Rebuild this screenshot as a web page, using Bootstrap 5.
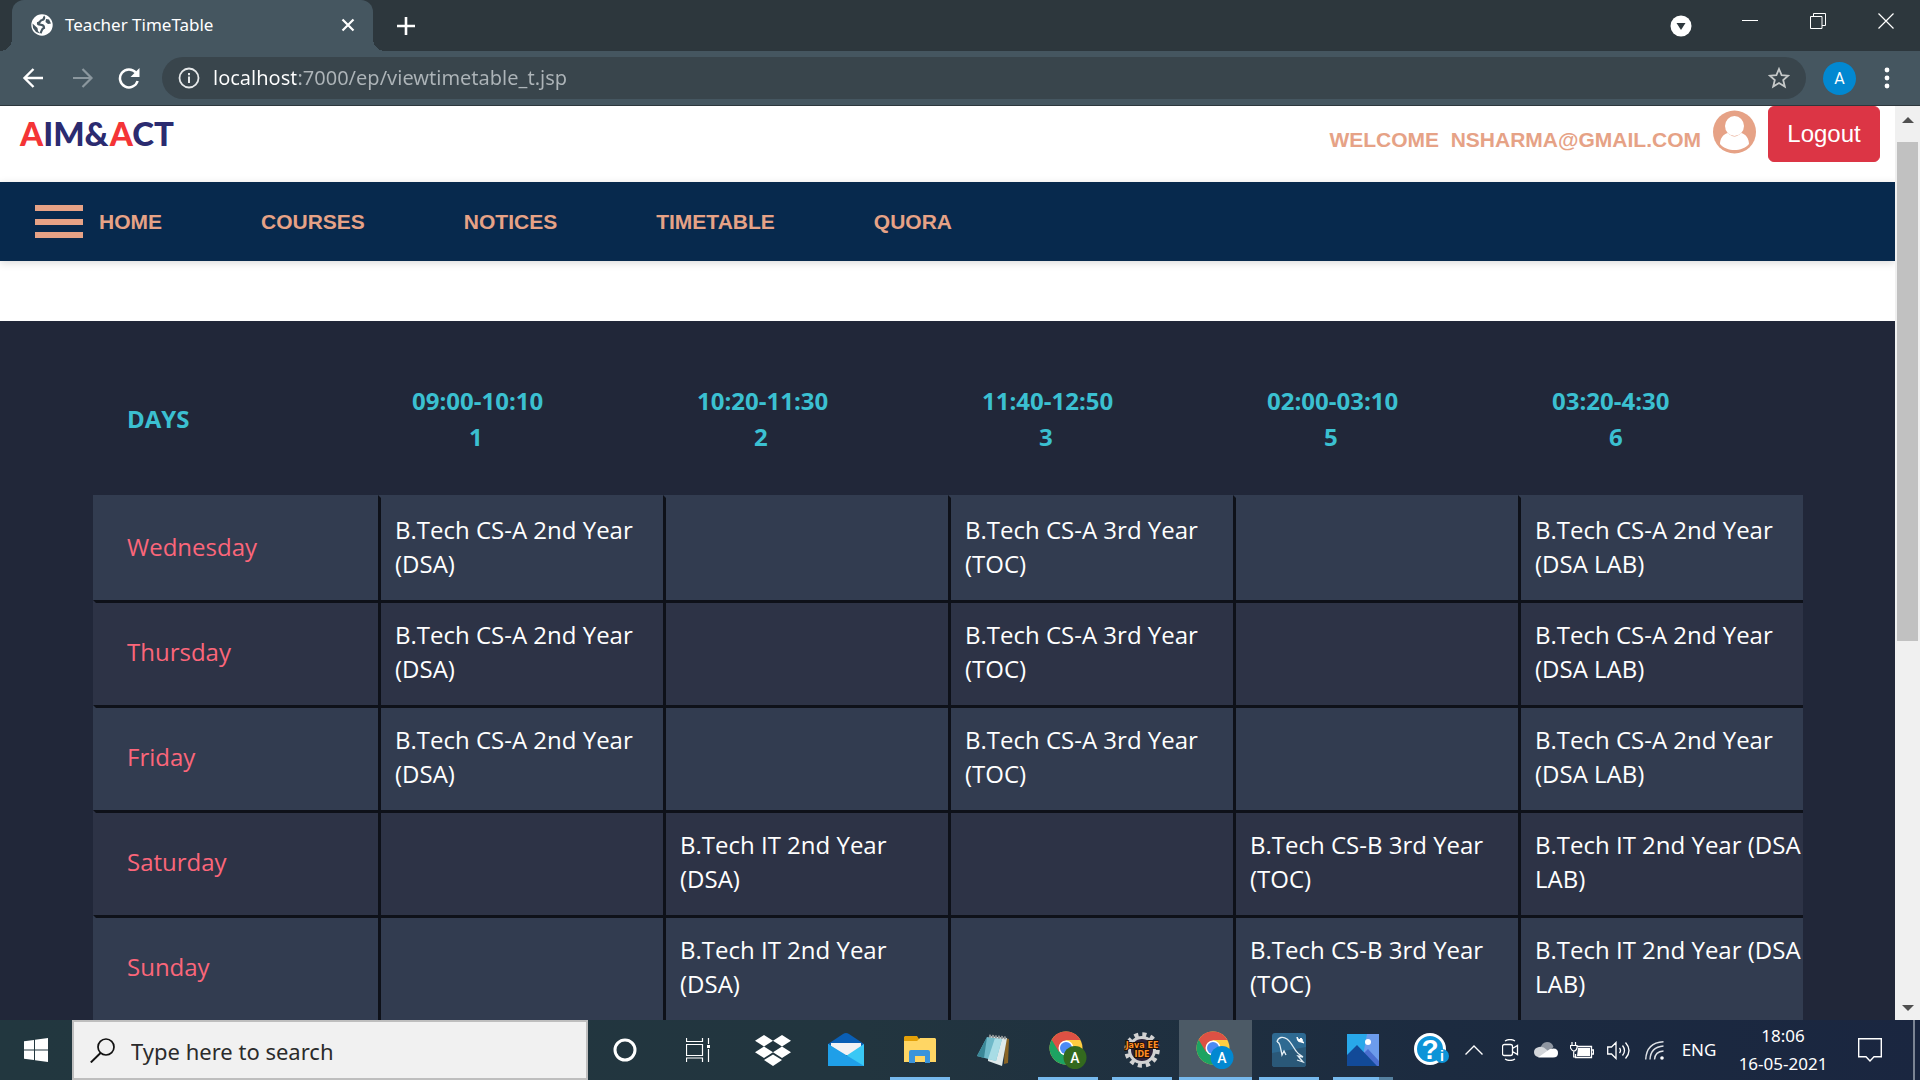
<!DOCTYPE html>
<html lang="en">
<head>
<meta charset="utf-8">
<meta name="viewport" content="width=device-width, initial-scale=1">
<title>Teacher TimeTable</title>
<link href="https://cdn.jsdelivr.net/npm/bootstrap@5.3.0/dist/css/bootstrap.min.css" rel="stylesheet">
<style>
  :root { --peach:#e6a286; --navy:#07294d; --ui:"Noto Sans","Open Sans",sans-serif; }
  body { font-family:"Liberation Sans",Arial,sans-serif; }
  svg { display:block; flex:none; }
  .plain { background:none; border:0; padding:0; color:inherit; display:flex; align-items:center; justify-content:center; }

  /* browser frame */
  .tabstrip { background:#2d373d; height:51px; color:#fff; font-family:var(--ui); padding-left:12px; }
  .tab { background:#455660; width:361px; border-radius:12px 12px 0 0; padding:0 16px 2px 19px; font-size:17px; position:relative; }
  .tab::before, .tab::after { content:""; position:absolute; bottom:0; width:12px; height:12px; }
  .tab::before { left:-12px; background:radial-gradient(circle at 0 0,transparent 12px,#455660 12px); }
  .tab::after { right:-12px; background:radial-gradient(circle at 100% 0,transparent 12px,#455660 12px); }
  .winctl { width:68px; height:42px; }
  .toolbar { background:#455660; height:55px; border-bottom:1px solid #2d373d; color:#fff; padding:0 22px; }
  .addr { background:#39454c; height:42px; border-radius:21px; padding:0 16px; margin-left:22px; }
  .addr input { border:0; outline:0; padding:0; margin-left:13px; height:34px; font:20px/34px var(--ui); color:transparent;
    background:linear-gradient(90deg,#fff 83px,#adb4b8 83px); -webkit-background-clip:text; background-clip:text; }
  .profile { width:33px; height:33px; background:#0288d1; font:16px Roboto,sans-serif; margin:0 20px 0 17px; color:#fff; }

  /* page header */
  .tophead { height:76px; padding:0 15px 0 20px; }
  .brand { font:900 33px/54px Lato,Roboto,sans-serif; color:#2b2b70; text-decoration:none; }
  .brand b { color:#f43436; font-weight:inherit; }
  .user { color:var(--peach); font-size:21px; font-weight:bold; line-height:24px; margin-top:22px; white-space:pre; }
  .btn-logout { font-size:24px; height:56px; width:112px; border-radius:6px; line-height:30px; }
  .mainnav { background:var(--navy); height:79px; padding-left:35px; box-shadow:0 2px 8px rgba(0,0,0,.15); }
  .mainnav a { color:var(--peach); font-size:21px; font-weight:bold; text-decoration:none; }
  .burger { width:48px; height:33px; margin-right:16px; }
  .burger span { display:block; height:6px; width:100%; background:var(--peach); }
  .links { gap:99px; }

  /* timetable */
  .board { background:#212739; margin-top:60px; padding:24px 92px 0 93px; font-family:"Open Sans","Noto Sans",sans-serif; font-size:24px; }
  .slots { width:100%; table-layout:fixed; border-collapse:separate; border-spacing:0; color:#fff; }
  .slots thead th { height:150px; padding:0 0 2px 34px; color:#3bc0d1; line-height:36px; vertical-align:middle; }
  .period { display:block; padding-left:57px; }
  .slots tbody > tr > * { height:105px; border:solid #0e1119; border-width:3px 0 0 3px; padding:0 0 4px 14px; line-height:34px; font-weight:400; }
  .slots tbody tr:nth-child(odd) > * { background:#323c50; }
  .slots tbody tr:nth-child(even) > * { background:#2d3346; }
  .slots tbody tr > th { border-left-color:transparent; color:#fb667a; padding-left:31px; }
  .slots tbody tr:first-child > * { border-top-color:transparent; }

  .scroller { width:25px; background:#f0f0f0; padding:0 2px; }
  .scroller .arrow { height:36px; width:100%; }
  .scroller .down { height:24px; }
  .thumb { background:#c1c1c1; flex:0 1 499px; width:100%; }

  /* taskbar */
  .taskbar { height:60px; background:linear-gradient(90deg,#22373f 0,#22353f 45%,#1c2b40 75%,#1a2640 100%); color:#fff; font-family:var(--ui); }
  .start { width:72px; }
  .search { width:516px; background:#f1f1f1; border:2px solid #bebebe; padding-left:16px; }
  .search input { border:0; outline:0; background:none; font:22px var(--ui); color:#222; padding:2px 0 0; }
  .search input::placeholder { color:#2b2b2b; opacity:1; }
  .app { flex:1 1 0; position:relative; }
  .app.open::after { content:""; position:absolute; left:7px; right:7px; bottom:0; height:3px; background:#76b9ed; }
  .app.active { background:#4c5a66; }
  .app.active::after { left:0; right:0; }
  .app.multi::after { background:linear-gradient(90deg,#76b9ed 76%,#55809f 76%); }
  .tray > * { width:36px; }
  .tray .help { width:48px; }
  .tray .lang { width:54px; font-size:17px; }
  .tray .clock { width:114px; font-size:17px; line-height:28px; }
  .tray .notes { width:60px; }
  .tray .desk { width:7px; margin-left:13px; border-left:2px solid #7b8494; }
</style>
</head>
<body class="vh-100 d-flex flex-column overflow-hidden">

<header class="flex-shrink-0">
  <div class="tabstrip d-flex">
    <div class="tab d-flex align-items-center">
      <svg width="22" height="22" viewBox="0 0 22 22"><circle cx="11" cy="11" r="10.700" fill="#fff"/><path d="M12.500 2.500c1.500 1 .500 3-1.500 3.500-2 .300-1.500 2.500-4 3-.500 2 1.500 1.500 3.500 1.800 2 .200 2.500 1.500 2.500 3-2.500.500-2 3-3.500 5.500" fill="none" stroke="#455660" stroke-width="2.200"/><path d="M1.500 9.500l5 4.500.500 3 2 2.500-4-1.500-3-4zM15 5l3 .500 2 4-3 .500-2.500-2z" fill="#455660"/></svg>
      <span class="ms-2 ps-1 flex-grow-1">Teacher TimeTable</span>
      <button class="plain" aria-label="Close tab"><svg width="18" height="18" viewBox="0 0 18 18"><path d="M3.500 3.500l11 11M14.500 3.500l-11 11" stroke="#fff" stroke-width="2.200"/></svg></button>
    </div>
    <button class="plain px-4" aria-label="New tab"><svg width="18" height="18" viewBox="0 0 18 18"><path d="M9 0v18M0 9h18" stroke="#fff" stroke-width="2.600"/></svg></button>
    <div class="ms-auto d-flex align-items-start">
      <button class="plain h-100 me-4" aria-label="Search tabs"><svg width="22" height="22" viewBox="0 0 22 22"><circle cx="11" cy="11" r="10.500" fill="#fff"/><path d="M6.500 8h9L11 15z" fill="#2d373d"/></svg></button>
      <button class="plain winctl" aria-label="Minimise"><svg width="16" height="16" viewBox="0 0 16 16"><path d="M0 7.500h16" stroke="#fff"/></svg></button>
      <button class="plain winctl" aria-label="Restore"><svg width="16" height="16" viewBox="0 0 16 16"><path d="M.500 3.500h11.500v12H.500zM3.500 3.500v-3h12v12H12" fill="none" stroke="#fff"/></svg></button>
      <button class="plain winctl" aria-label="Close"><svg width="16" height="16" viewBox="0 0 16 16"><path d="M.500.500l15 15M15.500.500l-15 15" stroke="#fff" stroke-width="1.200"/></svg></button>
    </div>
  </div>
  <div class="toolbar d-flex align-items-center">
    <button class="plain" aria-label="Back"><svg width="22" height="22" viewBox="0 0 22 22"><path d="M21 11H3M11.500 2L2.500 11l9 9" fill="none" stroke="#fff" stroke-width="2.400"/></svg></button>
    <button class="plain ms-4 ps-1" aria-label="Forward"><svg width="22" height="22" viewBox="0 0 22 22"><path d="M1 11h18M10.500 2l9 9-9 9" fill="none" stroke="#8b979e" stroke-width="2.200"/></svg></button>
    <button class="plain ms-4" aria-label="Reload"><svg width="22" height="22" viewBox="0 0 22 22"><path d="M17.800 5.500A9 9 0 1 0 19.600 14" fill="none" stroke="#fff" stroke-width="2.500"/><path d="M21.500 1v9h-9z" fill="#fff"/></svg></button>
    <div class="addr d-flex align-items-center flex-grow-1">
      <svg width="22" height="22" viewBox="0 0 22 22"><circle cx="11" cy="11" r="9.500" fill="none" stroke="#e6e9ea" stroke-width="1.800"/><path d="M11 9.500V16M11 6v2.200" stroke="#e6e9ea" stroke-width="2"/></svg>
      <input class="flex-grow-1" aria-label="Address" value="localhost:7000/ep/viewtimetable_t.jsp">
      <button class="plain" aria-label="Bookmark"><svg width="22" height="22" viewBox="0 0 22 22"><path d="M11 2l2.600 6.200 6.600.500-5 4.300 1.600 6.500L11 16l-5.800 3.500L6.800 13l-5-4.300 6.600-.500z" fill="none" stroke="#c6c9c9" stroke-width="1.800"/></svg></button>
    </div>
    <button class="plain profile rounded-circle" aria-label="Profile">A</button>
    <button class="plain" aria-label="Menu"><svg width="22" height="22" viewBox="0 0 22 22"><g fill="#fff"><circle cx="11" cy="3" r="2.400"/><circle cx="11" cy="11" r="2.400"/><circle cx="11" cy="19" r="2.400"/></g></svg></button>
  </div>
</header>

<div class="d-flex flex-grow-1 overflow-hidden">
  <main class="flex-grow-1 overflow-hidden bg-white d-flex flex-column">
    <div class="tophead d-flex align-items-start justify-content-between flex-shrink-0">
      <a class="brand" href="#"><b>A</b>IM&amp;<b>A</b>CT</a>
      <div class="d-flex align-items-start">
        <span class="user">WELCOME  NSHARMA@GMAIL.COM</span>
        <svg class="mx-2 px-1 mt-1" width="51" height="44" viewBox="0 0 43 44"><circle cx="21.500" cy="22" r="21.500" fill="#e6a286"/><ellipse cx="21.500" cy="16" rx="9.500" ry="10" fill="#fff"/><path d="M7 34c0-5 3-10 8-11 4 4.500 9 4.500 13 0 5 1 8 6 8 11-7 8-22 8-29 0z" fill="#fff"/></svg>
        <button class="btn btn-danger btn-logout">Logout</button>
      </div>
    </div>
    <nav class="mainnav d-flex align-items-center flex-shrink-0">
      <button class="plain burger flex-column justify-content-between" aria-label="Menu"><span></span><span></span><span></span></button>
      <div class="links d-flex">
        <a href="#">HOME</a><a href="#">COURSES</a><a href="#">NOTICES</a><a href="#">TIMETABLE</a><a href="#">QUORA</a>
      </div>
    </nav>
    <section class="board flex-grow-1">
      <table class="slots">
        <thead>
          <tr>
            <th scope="col">DAYS</th>
            <th scope="col">09:00-10:10<span class="period">1</span></th>
            <th scope="col">10:20-11:30<span class="period">2</span></th>
            <th scope="col">11:40-12:50<span class="period">3</span></th>
            <th scope="col">02:00-03:10<span class="period">5</span></th>
            <th scope="col">03:20-4:30<span class="period">6</span></th>
          </tr>
        </thead>
        <tbody>
          <tr><th scope="row">Wednesday</th><td>B.Tech CS-A 2nd Year (DSA)</td><td></td><td>B.Tech CS-A 3rd Year (TOC)</td><td></td><td>B.Tech CS-A 2nd Year (DSA LAB)</td></tr>
          <tr><th scope="row">Thursday</th><td>B.Tech CS-A 2nd Year (DSA)</td><td></td><td>B.Tech CS-A 3rd Year (TOC)</td><td></td><td>B.Tech CS-A 2nd Year (DSA LAB)</td></tr>
          <tr><th scope="row">Friday</th><td>B.Tech CS-A 2nd Year (DSA)</td><td></td><td>B.Tech CS-A 3rd Year (TOC)</td><td></td><td>B.Tech CS-A 2nd Year (DSA LAB)</td></tr>
          <tr><th scope="row">Saturday</th><td></td><td>B.Tech IT 2nd Year (DSA)</td><td></td><td>B.Tech CS-B 3rd Year (TOC)</td><td>B.Tech IT 2nd Year (DSA LAB)</td></tr>
          <tr><th scope="row">Sunday</th><td></td><td>B.Tech IT 2nd Year (DSA)</td><td></td><td>B.Tech CS-B 3rd Year (TOC)</td><td>B.Tech IT 2nd Year (DSA LAB)</td></tr>
        </tbody>
      </table>
    </section>
  </main>
  <div class="scroller d-flex flex-column flex-shrink-0" aria-hidden="true">
    <div class="arrow d-flex align-items-center justify-content-center pb-2"><svg width="12" height="6" viewBox="0 0 12 6"><path d="M0 6l6-6 6 6z" fill="#505050"/></svg></div>
    <div class="thumb"></div>
    <div class="arrow down mt-auto d-flex align-items-center justify-content-center"><svg width="12" height="6" viewBox="0 0 12 6"><path d="M0 0h12L6 6z" fill="#505050"/></svg></div>
  </div>
</div>

<footer class="taskbar d-flex flex-shrink-0">
  <button class="plain start" aria-label="Start"><svg width="24" height="24" viewBox="0 0 24 24"><path d="M0 3.300l10-1.300v9.500H0zM11 1.800L24 0v11.500H11zM0 12.500h10V22L0 20.700zM11 12.500h13V24l-13-1.800z" fill="#fff"/></svg></button>
  <label class="search d-flex align-items-center">
    <svg width="25" height="25" viewBox="0 0 25 25"><circle cx="16" cy="9" r="8" fill="none" stroke="#111" stroke-width="1.700"/><path d="M10.500 15L.800 24.500" stroke="#111" stroke-width="1.900"/></svg>
    <input class="flex-grow-1 ms-3" type="text" placeholder="Type here to search" aria-label="Type here to search">
  </label>
  <div class="d-flex flex-grow-1">
    <button class="plain app" aria-label="Cortana"><svg width="24" height="24" viewBox="0 0 24 24"><circle cx="12" cy="12" r="10" fill="none" stroke="#fff" stroke-width="3"/></svg></button>
    <button class="plain app" aria-label="Task view"><svg width="25" height="24" viewBox="0 0 25 24"><path d="M.500 0v3.500h16V0M.500 6.500h16v11H.500zM.500 24v-4h16v4M22.500 0v6M22.500 11v13" fill="none" stroke="#fff" stroke-width="1.200"/><path d="M21 7h3v3h-3z" fill="#fff"/></svg></button>
    <button class="plain app" aria-label="Dropbox"><svg width="36" height="31" viewBox="0 0 36 31"><path d="M9 0l9 5.700-9 5.800-9-5.800zM27 0l9 5.700-9 5.800-9-5.800zM9 11.500l9 5.700-9 5.800-9-5.800zM27 11.500l9 5.700-9 5.800-9-5.800zM18 19.500l9 5.600L18 31l-9-5.900z" fill="#fff"/></svg></button>
    <button class="plain app" aria-label="Mail"><svg width="36" height="34" viewBox="0 0 36 34"><path d="M0 11L15 1q3-2 6 0l15 10v6H0z" fill="#0a5fb5"/><path d="M3 10h30v12H3z" fill="#f2f2f4"/><path d="M0 11l18 12 18-12v22H0z" fill="#39c8f5"/><path d="M0 11l36 22H0z" fill="#1f9fe8"/></svg></button>
    <button class="plain app open" aria-label="File Explorer"><svg width="32" height="28" viewBox="0 0 32 28"><path d="M1 0h12l2 3h16l1 1v22H0V1z" fill="#e3a008"/><path d="M0 5h13l3-3h15l1 1v23H0z" fill="#ffd664"/><path d="M5 27V16q0-2 2-2h17q2 0 2 2v11h-5v-7H11v7z" fill="#3a94dc"/></svg></button>
    <button class="plain app" aria-label="Notepad"><svg width="34" height="34" viewBox="0 0 34 34"><path d="M28 5l4 1-1 24-4 1z" fill="#8a6425"/><path d="M12 3l18 2-5 28-14-5z" fill="#dfe9ea"/><path d="M10 4l15 2-6 22-19-5z" fill="#6fb9c9"/><path d="M10 4L0 23l7 2z" fill="#3a8797"/><path d="M18 5l7 1-6 22-8-2z" fill="#a8dce5"/><path d="M12 3l18 2" stroke="#8d9293" stroke-width="3" stroke-dasharray="2 1"/></svg></button>
    <button class="plain app open" aria-label="Chrome, profile A"><svg width="38" height="38" viewBox="0 0 38 38"><circle cx="17" cy="17" r="16.500" fill="#ffcd40"/><path d="M17 17L2.700 8.800A16.500 16.500 0 0 0 17 33.500l8-12z" fill="#1da362"/><path d="M2.700 8.800A16.500 16.500 0 0 1 31.500 9H17l-7 12z" fill="#dd5144"/><circle cx="17" cy="17" r="7.500" fill="#fff"/><circle cx="17" cy="17" r="6" fill="#4c8bf5"/><circle cx="26" cy="26.500" r="11.500" fill="#33691e"/><text x="26" y="31.500" text-anchor="middle" font-family="Roboto" font-weight="500" font-size="14" fill="#fff">A</text></svg></button>
    <button class="plain app open" aria-label="Java EE IDE"><svg width="36" height="36" viewBox="0 0 36 36"><circle cx="18" cy="18" r="15.500" fill="none" stroke="#d2d2d2" stroke-width="4.500" stroke-dasharray="4.100 4"/><circle cx="18" cy="18" r="12.500" fill="#2b2138" stroke="#d2d2d2" stroke-width="3"/><g font-family="DejaVu Sans" font-weight="bold" font-size="8" fill="#ff8d22" text-anchor="middle" stroke="#201008" stroke-width="2" paint-order="stroke"><text x="18" y="16">Java EE</text><text x="18" y="25">IDE</text></g></svg></button>
    <button class="plain app open active" aria-label="Chrome, current window"><svg width="38" height="38" viewBox="0 0 38 38"><circle cx="17" cy="17" r="16.500" fill="#ffcd40"/><path d="M17 17L2.700 8.800A16.500 16.500 0 0 0 17 33.500l8-12z" fill="#1da362"/><path d="M2.700 8.800A16.500 16.500 0 0 1 31.500 9H17l-7 12z" fill="#dd5144"/><circle cx="17" cy="17" r="7.500" fill="#fff"/><circle cx="17" cy="17" r="6" fill="#4c8bf5"/><circle cx="26" cy="26.500" r="11.500" fill="#0288d1"/><text x="26" y="31.500" text-anchor="middle" font-family="Roboto" font-weight="500" font-size="14" fill="#fff">A</text></svg></button>
    <button class="plain app open" aria-label="MySQL Workbench"><svg width="34" height="34" viewBox="0 0 34 34"><rect width="34" height="34" rx="3" fill="#2e6a92"/><path d="M0 20l34-6v17q0 3-3 3H3q-3 0-3-3z" fill="#2a5878"/><path d="M5 9c1-5 6-6 10-3s6 8 9 12c2 3 4 4 7 6l-5-1 5 6-6-2M5 9c3 0 3 4 4 8l1 5 2-4 2 4" fill="none" stroke="#e4eef4" stroke-width="1.300"/><path d="M25 4l2 3 2-2c2 1 1 4 3 5l-3-1c-3 0-4-2-4-5z" fill="#fff" stroke="#fff"/></svg></button>
    <button class="plain app open multi" aria-label="Photos"><svg width="32" height="32" viewBox="0 0 32 32"><path d="M0 0h32v32H0z" fill="#28a8ea"/><path d="M20 0h12v32H14z" fill="#6c9cec"/><circle cx="21" cy="8" r="3" fill="#fff"/><path d="M12 24l9-9 11 12v5H12z" fill="#4a6fd0"/><path d="M0 21L10 11l20 21H0z" fill="#124a98"/></svg></button>
  </div>
  <div class="tray d-flex ps-2">
    <button class="plain help" aria-label="Help"><svg width="36" height="34" viewBox="0 0 36 34"><circle cx="16" cy="16" r="14.500" fill="#0d94d8" stroke="#fff" stroke-width="3"/><text x="16" y="26" text-anchor="middle" font-family="Liberation Sans" font-weight="bold" font-size="28" fill="#fff">?</text><circle cx="28" cy="23" r="7" fill="#0d94d8"/><text x="28" y="28" text-anchor="middle" font-family="Liberation Sans" font-weight="bold" font-size="14" fill="#fff">i</text></svg></button>
    <button class="plain" aria-label="Show hidden icons"><svg width="18" height="10" viewBox="0 0 18 10"><path d="M.500 9.500L9 1l8.500 8.500" fill="none" stroke="#fff" stroke-width="1.400"/></svg></button>
    <button class="plain" aria-label="Meet now"><svg width="17" height="22" viewBox="0 0 17 22"><path d="M3 2q5-3 10 0M3 20q5 3 10 0M2.500 5.500h6q2 0 2 2v7q0 2-2 2h-6q-2 0-2-2v-7q0-2 2-2zM10.500 9.500l5-3v9l-5-3" fill="none" stroke="#fff" stroke-width="1.300"/></svg></button>
    <button class="plain" aria-label="OneDrive"><svg width="24" height="16" viewBox="0 0 24 16"><path d="M6 7Q8 0 13 0q5 0 6.500 5L13 11z" fill="#8f96a1"/><path d="M4 15q-4-1-4-5t5-5q4-1 8 3l7 7z" fill="#d3d6da"/><path d="M4 15.500L16 7q8-2 8 4 0 4.500-5 4.500z" fill="#fff"/></svg></button>
    <button class="plain" aria-label="Battery"><svg width="24" height="17" viewBox="0 0 24 17"><path d="M7 4.500h14.500v11H5.500V12M22 8h1.500v4H22" fill="none" stroke="#fff" stroke-width="1.300"/><path d="M8 6h12v8H7z" fill="#fff"/><path d="M2 0v3M5.500 0v3M.500 3.500h6.500V6q-1 3-3 3T.500 6zM3.700 9v6h2" fill="none" stroke="#fff" stroke-width="1.200"/></svg></button>
    <button class="plain" aria-label="Volume"><svg width="23" height="19" viewBox="0 0 23 19"><path d="M.700 6h3.800L9 1.500v16L4.500 13H.700zM12.500 7q2 2.500 0 5M15.500 4.500q4 5 0 10M18.500 1.500q7 8 0 16" fill="none" stroke="#fff" stroke-width="1.300"/></svg></button>
    <button class="plain" aria-label="Network"><svg width="19" height="19" viewBox="0 0 19 19"><path d="M.700 18.500Q1.500 1.500 18.500.700M5 18.500Q5.500 6 18.500 5M9.500 18.500q.500-8 9-8.500" fill="none" stroke="#dfe2e6" stroke-width="1.400"/><circle cx="17" cy="17" r="1.800" fill="#fff"/></svg></button>
    <button class="plain lang">ENG</button>
    <button class="plain clock"><time datetime="2021-05-16T18:06">18:06<br>16-05-2021</time></button>
    <button class="plain notes" aria-label="Notifications"><svg width="24" height="24" viewBox="0 0 24 24"><path d="M.700.700h22.600v18H16l-4 4.300-4-4.300H.700z" fill="none" stroke="#fff" stroke-width="1.400"/></svg></button>
    <div class="desk"></div>
  </div>
</footer>
<script src="https://cdn.jsdelivr.net/npm/bootstrap@5.3.0/dist/js/bootstrap.bundle.min.js"></script>
</body>
</html>
